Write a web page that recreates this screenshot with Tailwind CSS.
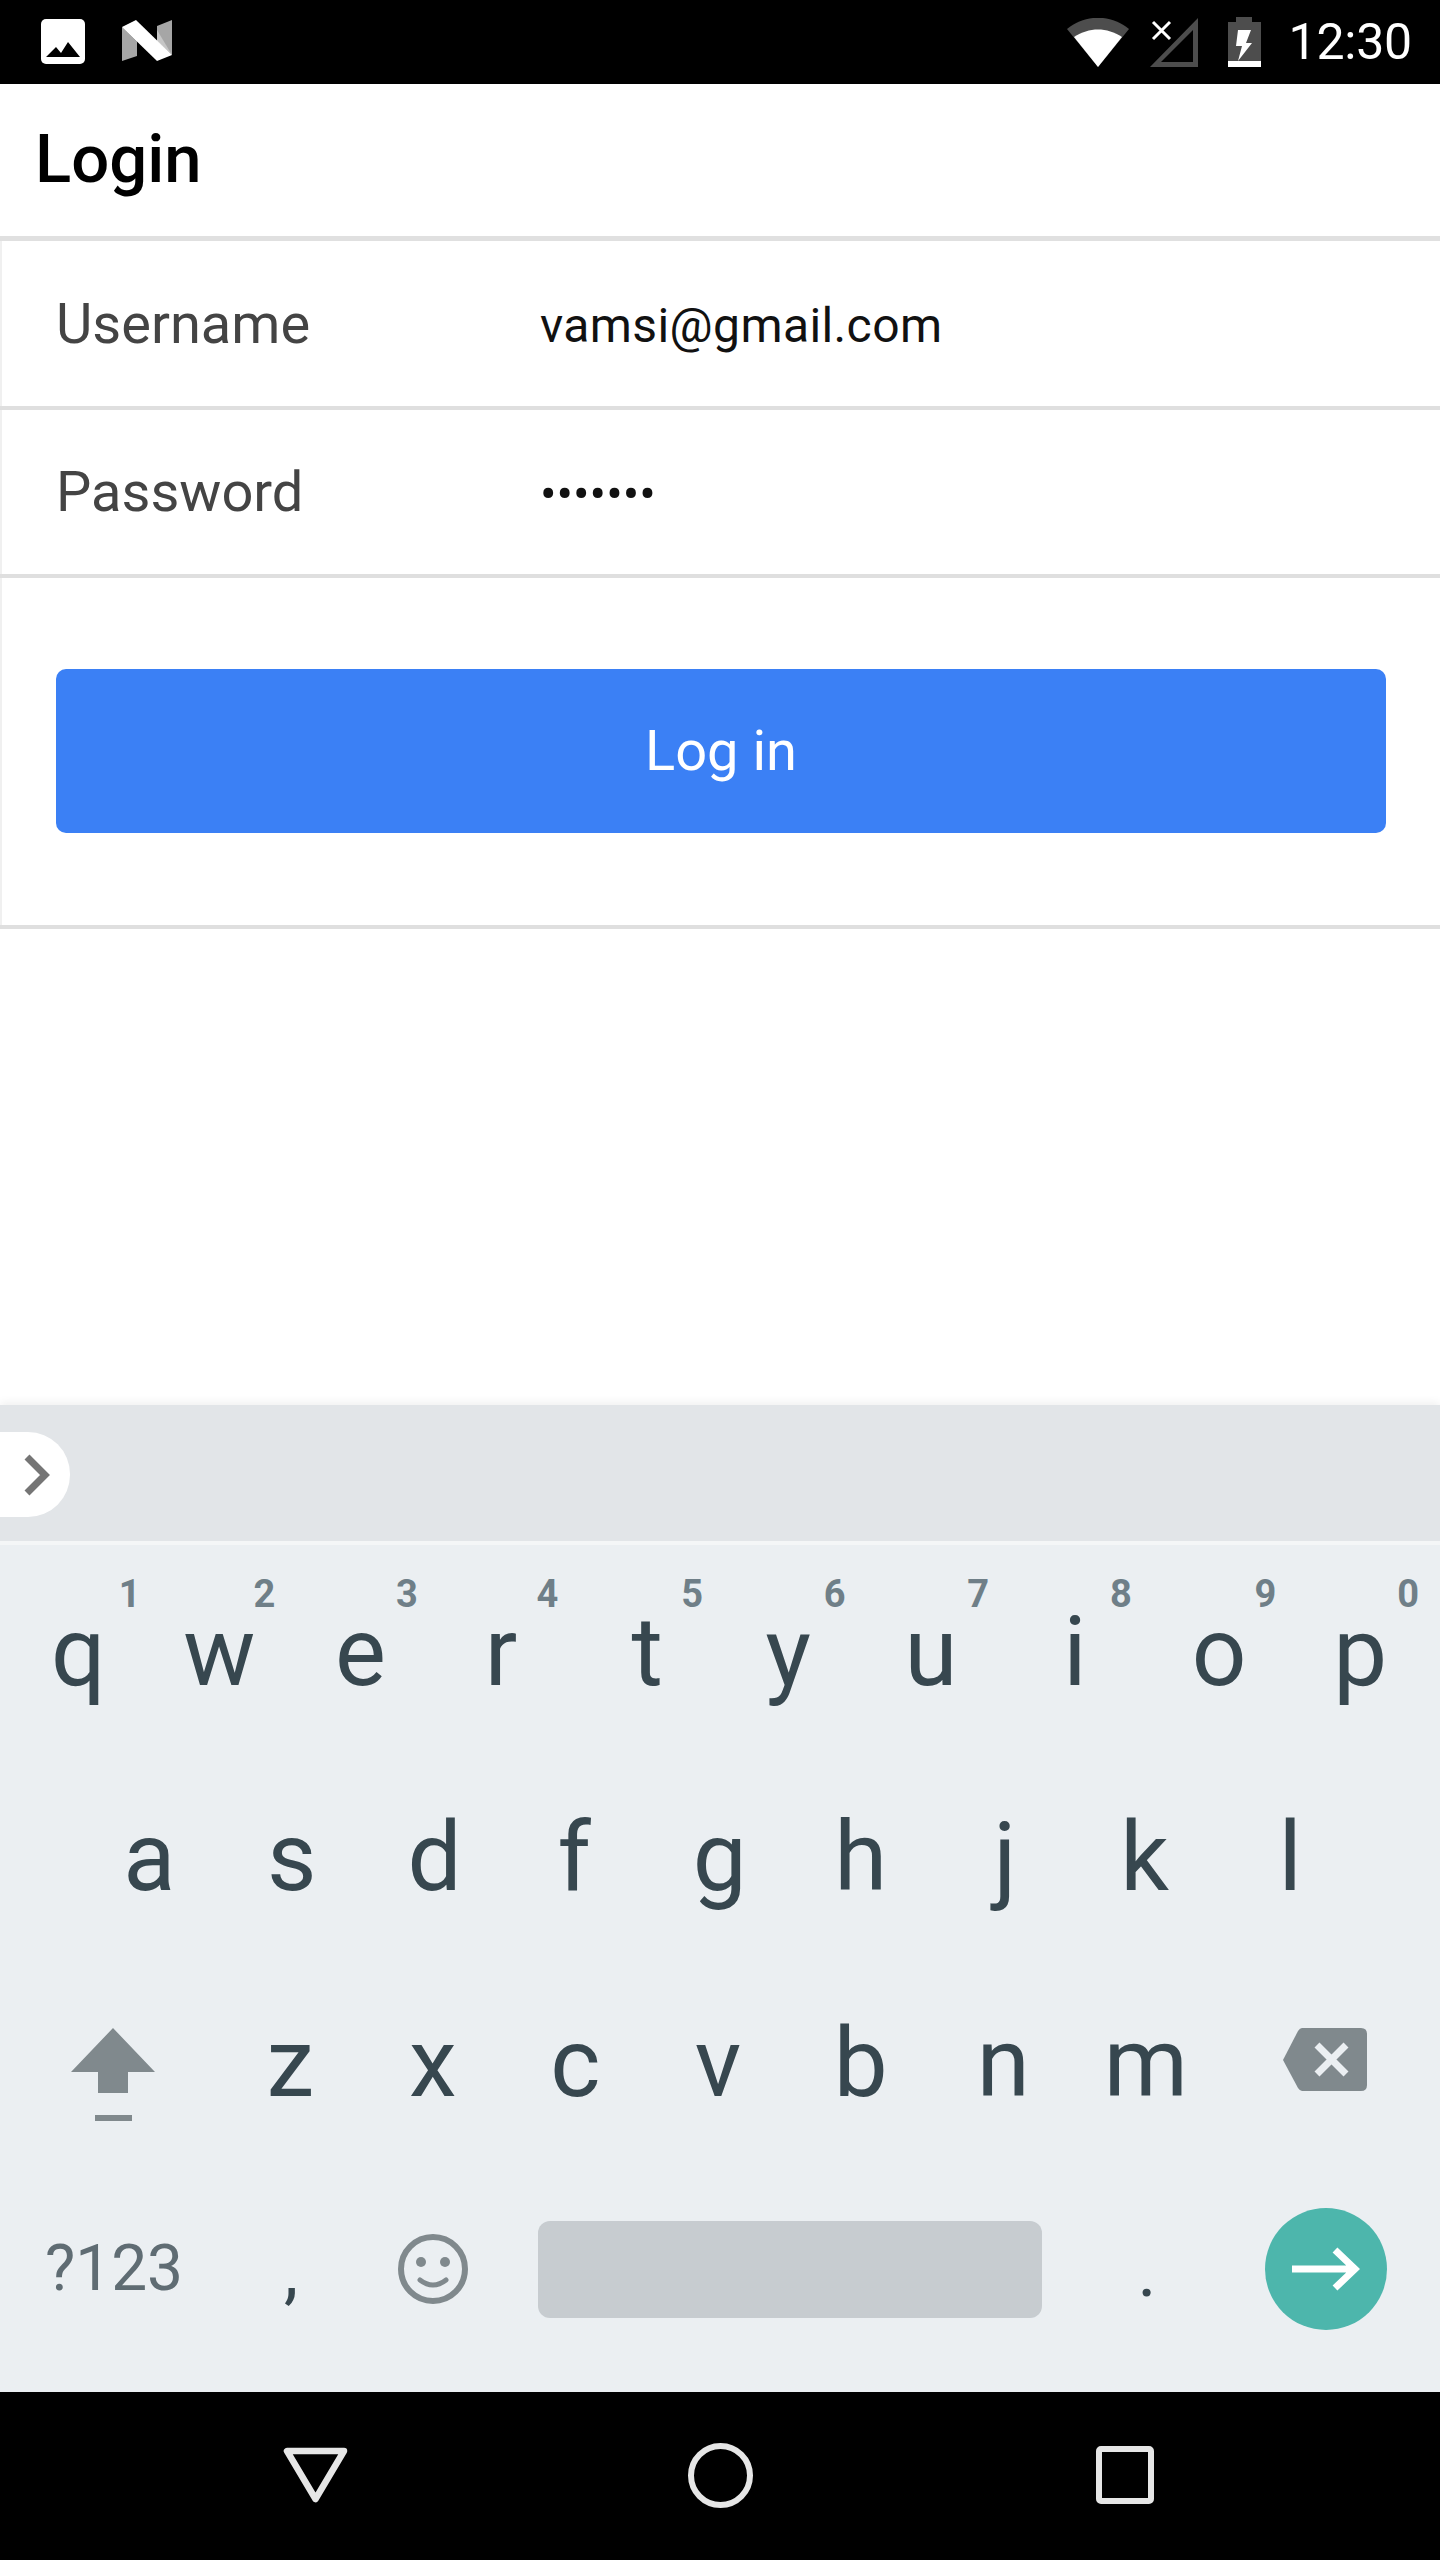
<!doctype html>
<html><head><meta charset="utf-8"><script src="https://cdn.jsdelivr.net/npm/@tailwindcss/browser@4"></script></head>
<body class="m-0">
<div class="w-[1440px] h-[2560px] flex flex-col bg-white overflow-hidden font-['Roboto',sans-serif]">
  <!-- status bar -->
  <div class="h-[84px] shrink-0 bg-black flex items-center pl-[40px] pr-[28px]">
    <svg class="w-[46px] h-[46px] mb-[1px]" viewBox="0 0 46 46"><rect x="1" y="0" width="44" height="45" rx="5" fill="#fff"/><path d="M6 38 L16 28 L21 34 L28 23 L40 38 Z" fill="#000"/></svg>
    <svg class="w-[52px] h-[44px] ml-[35px]" viewBox="0 0 52 44"><path d="M1 7 L16 22 L16 36 L1 41 Z" fill="#a6a6a6"/><path d="M36 6 L51 0 L51 35 L36 21 Z" fill="#a6a6a6"/><path d="M1 7 L16 16 L16 22 Z" fill="#c6c6c6"/><path d="M36 10 L51 35 L36 21 Z" fill="#c6c6c6"/><path d="M1 7 L15 0 L51 35 L36 41 Z" fill="#fff"/></svg>
    <div class="flex-1"></div>
    <svg class="w-[62px] h-[49px]" viewBox="0 0 62 49"><path d="M0 11 C18 -4 44 -4 62 11 L31 49 Z" fill="#4d4d4d"/><path d="M7 19 C22 9 40 9 55 19 L31 49 Z" fill="#fff"/></svg>
    <svg class="w-[48px] h-[49px] ml-[21px]" viewBox="0 0 48 49"><path d="M0 49 L48 0 L48 49 Z M11 44 L43 44 L43 12 Z" fill="#4d4d4d" fill-rule="evenodd"/><path d="M3 4 L20 21 M20 4 L3 21" stroke="#fff" stroke-width="3"/></svg>
    <svg class="w-[33px] h-[50px] ml-[30px]" viewBox="0 0 33 50"><path d="M8 0 H24 V5 H33 V44 H0 V5 H8 Z" fill="#4d4d4d"/><rect y="44" width="33" height="6" fill="#fff"/><path d="M10 13 H23 L18 26 H24 L10 44 L14 29 H8 Z" fill="#fff"/></svg>
    <span class="ml-[27px] text-white text-[50px] leading-[84px] tracking-[-0.2px]">12:30</span>
  </div>
  <!-- header -->
  <div class="h-[152px] shrink-0 flex items-center pl-[35px]"><h1 class="text-[67px] font-medium text-black leading-none pb-[2px]">Login</h1></div>
  <!-- form -->
  <div class="h-[5px] shrink-0 bg-[#e0e0e0]"></div>
  <div class="flex-1 flex flex-col">
    <div class="border-l-2 border-[#f0f0f0]">
      <div class="h-[165px] flex items-center border-b-[4px] border-[#dfdfdf] -ml-[2px] pl-[56px] box-content"><span class="w-[484px] text-[56px] text-[#444]">Username</span><span class="text-[48px] text-[#111] tracking-[0.4px] pt-[4px]">vamsi@gmail.com</span></div>
      <div class="h-[164px] flex items-center border-b-[4px] border-[#dfdfdf] -ml-[2px] pl-[56px] box-content"><span class="w-[484px] text-[56px] text-[#444]">Password</span><span class="text-[49px] text-[#111] pt-[6px]">•••••••</span></div>
      <div class="h-[351px] flex items-center pl-[56px] pr-[54px] pb-[2px] border-b-[4px] border-[#dfdfdf] -ml-[2px] box-border">
        <button class="w-full h-[164px] rounded-[10px] bg-[#3b80f5] text-white text-[56px]">Log in</button>
      </div>
    </div>
  </div>
  <!-- keyboard toolbar -->
  <div class="h-[136px] shrink-0 bg-[#e2e5e8] flex items-center shadow-[0_-3px_8px_rgba(0,0,0,0.06)]">
    <div class="w-[70px] h-[85px] bg-white rounded-r-[42px] flex items-center justify-end pr-[20px] mt-[3px]">
      <svg class="w-[26px] h-[42px]" viewBox="0 0 26 42"><path d="M3 3 L21 21 L3 39" fill="none" stroke="#757575" stroke-width="7"/></svg>
    </div>
  </div>
  <div class="h-[4px] shrink-0 bg-[#f4f6f7]"></div>
  <!-- keyboard -->
  <div class="h-[847px] shrink-0 bg-[#ebeff2] text-[#37474f] text-[96px] leading-none pt-[3px]">
    <div class="h-[206px] flex pl-[7px] pt-[2px] items-center">
      <div class="relative w-[142.6px] h-full flex items-center justify-center">q<span class="absolute right-[9px] top-[25px] text-[38px] font-bold text-[#6f7f88]">1</span></div>
      <div class="relative w-[142.6px] h-full flex items-center justify-center pr-[3px]">w<span class="absolute right-[17px] top-[25px] text-[38px] font-bold text-[#6f7f88]">2</span></div>
      <div class="relative w-[142.6px] h-full flex items-center justify-center pr-[6px]">e<span class="absolute right-[17px] top-[25px] text-[38px] font-bold text-[#6f7f88]">3</span></div>
      <div class="relative w-[142.6px] h-full flex items-center justify-center pr-[10px]">r<span class="absolute right-[19px] top-[25px] text-[38px] font-bold text-[#6f7f88]">4</span></div>
      <div class="relative w-[142.6px] h-full flex items-center justify-center pr-[3px]">t<span class="absolute right-[17px] top-[25px] text-[38px] font-bold text-[#6f7f88]">5</span></div>
      <div class="relative w-[142.6px] h-full flex items-center justify-center pr-[6px]">y<span class="absolute right-[17px] top-[25px] text-[38px] font-bold text-[#6f7f88]">6</span></div>
      <div class="relative w-[142.6px] h-full flex items-center justify-center pr-[6px]">u<span class="absolute right-[16px] top-[25px] text-[38px] font-bold text-[#6f7f88]">7</span></div>
      <div class="relative w-[142.6px] h-full flex items-center justify-center pr-[3px]">i<span class="absolute right-[16px] top-[25px] text-[38px] font-bold text-[#6f7f88]">8</span></div>
      <div class="relative w-[142.6px] h-full flex items-center justify-center">o<span class="absolute right-[14px] top-[25px] text-[38px] font-bold text-[#6f7f88]">9</span></div>
      <div class="relative w-[142.6px] h-full flex items-center justify-center pr-[3px]">p<span class="absolute right-[14px] top-[25px] text-[38px] font-bold text-[#6f7f88]">0</span></div>
    </div>
    <div class="h-[206px] flex pl-[78px] items-center">
      <div class="w-[142.6px] text-center">a</div><div class="w-[142.6px] text-center">s</div><div class="w-[142.6px] text-center">d</div><div class="w-[142.6px] text-center pr-[6px]">f</div><div class="w-[142.6px] text-center">g</div><div class="w-[142.6px] text-center pr-[3px]">h</div><div class="w-[142.6px] text-center">j</div><div class="w-[142.6px] text-center pr-[6px]">k</div><div class="w-[142.6px] text-center">l</div>
    </div>
    <div class="h-[206px] flex pl-[7px] items-center">
      <div class="w-[212px] flex justify-center mt-[23px]">
        <svg class="w-[84px] h-[93px]" viewBox="0 0 84 93"><path d="M42 0 L84 44 H57 V65 H27 V44 H0 Z" fill="#80898d"/><rect x="24" y="87" width="37" height="6" fill="#80898d"/></svg>
      </div>
      <div class="w-[142.6px] text-center">z</div><div class="w-[142.6px] text-center">x</div><div class="w-[142.6px] text-center">c</div><div class="w-[142.6px] text-center">v</div><div class="w-[142.6px] text-center">b</div><div class="w-[142.6px] text-center">n</div><div class="w-[142.6px] text-center">m</div>
      <div class="w-[216px] flex justify-center mb-[7px]">
        <svg class="w-[84px] h-[63px]" viewBox="0 0 84 63"><path d="M19 0 H78 Q84 0 84 6 V57 Q84 63 78 63 H19 Q17 63 15 60 L0 32 L15 3 Q17 0 19 0 Z" fill="#80898d"/><path d="M34 17 L63 46 M63 17 L34 46" stroke="#ebeff2" stroke-width="7"/></svg>
      </div>
    </div>
    <div class="h-[206px] flex pl-[7px] items-center">
      <div class="w-[212px] text-center text-[64px] text-[#5f6c73] pl-[2px]">?123</div>
      <div class="w-[142px] text-center text-[72px] pt-[6px] pl-[2px]">,</div>
      <div class="w-[144px] flex justify-center">
        <svg class="w-[70px] h-[70px]" viewBox="0 0 70 70"><circle cx="35" cy="35" r="32" fill="none" stroke="#80898d" stroke-width="6"/><circle cx="23" cy="28" r="5" fill="#80898d"/><circle cx="47" cy="28" r="5" fill="#80898d"/><path d="M22 46 Q35 56 48 46" fill="none" stroke="#80898d" stroke-width="5" stroke-linecap="round"/></svg>
      </div>
      <div class="w-[570px] flex justify-center"><div class="w-[504px] h-[97px] rounded-[12px] bg-[#c7ccd0]"></div></div>
      <div class="w-[144px] text-center text-[72px] pt-[6px]">.</div>
      <div class="w-[214px] flex justify-center">
        <div class="w-[122px] h-[122px] rounded-full bg-[#4db6ac] flex items-center justify-center">
          <svg class="w-[68px] h-[44px]" viewBox="0 0 68 44"><path d="M0 22 H62 M43 3 L63 22 L43 41" fill="none" stroke="#fff" stroke-width="7"/></svg>
        </div>
      </div>
    </div>
  </div>
  <!-- nav -->
  <div class="h-[168px] shrink-0 bg-black flex items-center justify-between pl-[283px] pr-[286px]">
    <svg class="w-[65px] h-[56px] mb-[2px]" viewBox="0 0 65 56"><path d="M4 4 H61 L32.5 52 Z" fill="none" stroke="#e6e6e6" stroke-width="6.5" stroke-linejoin="round"/></svg>
    <svg class="w-[65px] h-[65px] mb-[2px] mr-[4px]" viewBox="0 0 65 65"><circle cx="32.5" cy="32.5" r="29.5" fill="none" stroke="#e6e6e6" stroke-width="6"/></svg>
    <svg class="w-[58px] h-[58px] mb-[2px]" viewBox="0 0 58 58"><rect x="3" y="3" width="52" height="52" rx="2" fill="none" stroke="#e6e6e6" stroke-width="6"/></svg>
  </div>
</div>
</body></html>
